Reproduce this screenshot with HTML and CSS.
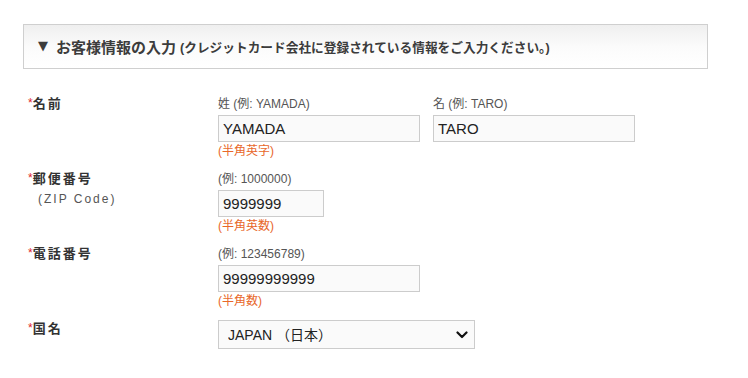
FILE: index.html
```html
<!DOCTYPE html>
<html lang="ja">
<head>
<meta charset="utf-8">
<link rel="stylesheet" href="styles.css">
</head>
<body>
<div class="section">
  <div class="panel-head">
    <span class="tri">▼</span>
    <span class="ttl">お客様情報の入力</span>
    <span class="sub">(クレジットカード会社に登録されている情報をご入力ください。)</span>
  </div>

  <div class="form">
    <div class="row">
      <div class="label"><span class="req">*</span>名前</div>
      <div class="field">
        <div class="pair">
          <div class="group">
            <div class="caption">姓 (例: YAMADA)</div>
            <input class="inp w-long" type="text" value="YAMADA">
            <div class="hint">(半角英字)</div>
          </div>
          <div class="group">
            <div class="caption">名 (例: TARO)</div>
            <input class="inp w-long" type="text" value="TARO">
          </div>
        </div>
      </div>
    </div>

    <div class="row">
      <div class="label"><span class="req">*</span>郵便番号
        <div class="sublabel">(ZIP Code)</div>
      </div>
      <div class="field">
        <div class="caption">(例: 1000000)</div>
        <input class="inp w-short" type="text" value="9999999">
        <div class="hint">(半角英数)</div>
      </div>
    </div>

    <div class="row row-tight">
      <div class="label"><span class="req">*</span>電話番号</div>
      <div class="field">
        <div class="caption">(例: 123456789)</div>
        <input class="inp w-long" type="text" value="99999999999">
        <div class="hint">(半角数)</div>
      </div>
    </div>

    <div class="row">
      <div class="label label-sel"><span class="req">*</span>国名</div>
      <div class="field">
        <div class="sel-wrap">
          <select class="sel">
            <option>JAPAN （日本）</option>
          </select>
          <svg class="chev" width="12" height="8" viewBox="0 0 12 8"><path d="M1.5 1.5 L6 6 L10.5 1.5" fill="none" stroke="#111" stroke-width="2.2" stroke-linecap="round" stroke-linejoin="round"/></svg>
        </div>
      </div>
    </div>
  </div>
</div>
</body>
</html>
```

FILE: styles.css
```css
html, body {
  margin: 0;
  padding: 0;
  background: #fff;
}
body {
  font-family: "Liberation Sans", "Noto Sans CJK JP", sans-serif;
  color: #333;
}
.section {
  padding: 24px 0 0 23px;
}
.panel-head {
  box-sizing: border-box;
  width: 685px;
  height: 45px;
  border: 1px solid #cfcfcf;
  background: linear-gradient(to bottom, #efefef 0%, #fbfbfb 50%, #ffffff 100%);
  display: flex;
  align-items: center;
  padding: 0 0 1px 14px;
  color: #3c3c3c;
  font-weight: bold;
}
.tri {
  font-family: "DejaVu Sans", sans-serif;
  font-size: 13px;
  font-weight: normal;
  margin-right: 8px;
  position: relative;
  top: -1px;
}
.ttl {
  font-size: 15px;
}
.sub {
  font-size: 12.7px;
  margin-left: 4px;
}
.form {
  margin-top: 27px;
}
.row {
  display: grid;
  grid-template-columns: 190px auto;
  padding-left: 5px;
  margin-bottom: 11px;
}
.row-tight {
  margin-bottom: 10px;
}
.label {
  font-size: 13px;
  font-weight: bold;
  letter-spacing: 2px;
  line-height: 16px;
  color: #333;
}
.label-sel {
  padding-top: 1px;
}
.req {
  color: #e0262a;
  font-weight: normal;
  font-size: 12px;
  letter-spacing: 0;
  vertical-align: top;
  position: relative;
  top: -1px;
}
.sublabel {
  font-weight: normal;
  font-size: 12px;
  letter-spacing: 2px;
  color: #555;
  margin-top: 4px;
  padding-left: 10px;
}
.pair {
  display: flex;
  gap: 13px;
}
.group {
  display: flex;
  flex-direction: column;
}
.field {
  display: flex;
  flex-direction: column;
  align-items: flex-start;
}
.caption {
  font-size: 12px;
  line-height: 16px;
  color: #555;
  margin-bottom: 3px;
}
.inp {
  box-sizing: border-box;
  height: 27px;
  margin: 0;
  border: 1px solid #cccccc;
  background: #fafafa;
  font-family: "Liberation Sans", "Noto Sans CJK JP", sans-serif;
  font-size: 15px;
  color: #222;
  padding: 0 4px;
  outline: none;
}
.w-long {
  width: 202px;
}
.w-short {
  width: 106px;
}
.hint {
  font-size: 12px;
  line-height: 18px;
  color: #e8672a;
}
.sel-wrap {
  position: relative;
  width: 257px;
}
.sel {
  box-sizing: border-box;
  width: 257px;
  height: 29px;
  margin: 0;
  border: 1px solid #cccccc;
  background: #fafafa;
  -webkit-appearance: none;
  appearance: none;
  font-family: "Liberation Sans", "Noto Sans CJK JP", sans-serif;
  font-size: 14px;
  color: #222;
  padding: 0 0 0 9px;
  outline: none;
  border-radius: 0;
}
.chev {
  position: absolute;
  right: 7px;
  top: 11px;
}
```
